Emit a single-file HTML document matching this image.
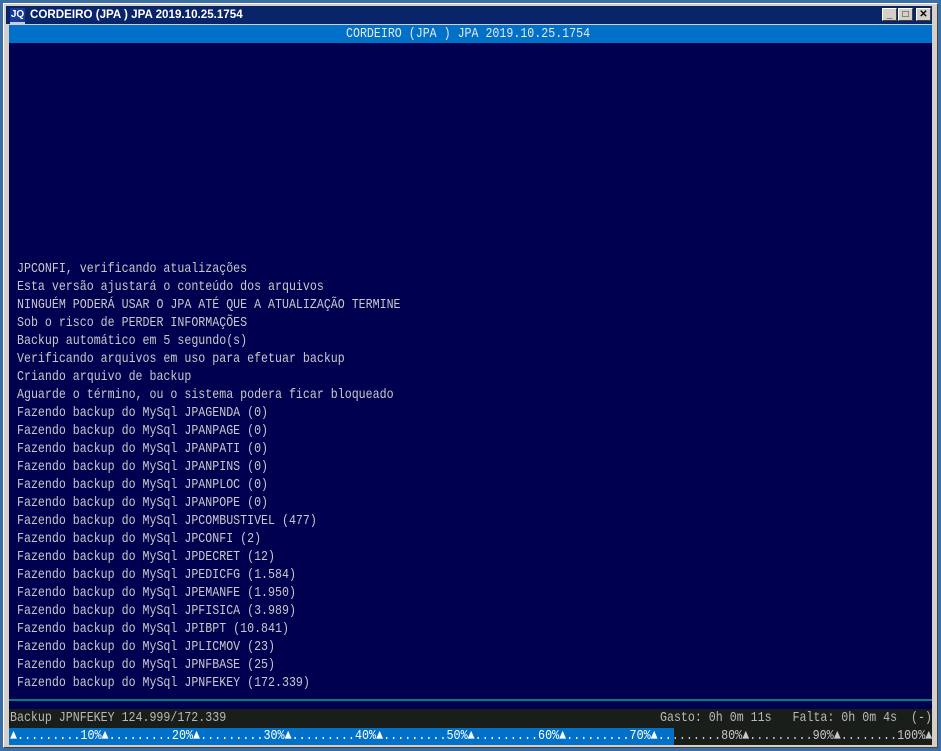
<!DOCTYPE html><html><head><meta charset="utf-8"><style>
body{margin:0;width:941px;height:751px;background:#3a6ea5;position:relative;overflow:hidden;font-family:"Liberation Mono",monospace}
.win{position:absolute;left:3px;top:3px;width:935px;height:745px;background:#d4d0c8;border-top:1px solid #fff;border-left:1px solid #fff;border-right:1px solid #404040;border-bottom:1px solid #404040;box-sizing:border-box}
.title{position:absolute;left:6px;top:6px;width:926px;height:18px;background:#0a246a;color:#fff;font:bold 11.6px "Liberation Sans",sans-serif;line-height:18px}
.title .ic{position:absolute;left:4px;top:2px;width:15px;height:14px;background:#1a3a9a;color:#fff;font-size:10px;line-height:13px;text-align:center;border-bottom:2px solid #ccd}
.btn{position:absolute;top:2px;width:15px;height:13px;background:#d4d0c8;border-top:1px solid #fff;border-left:1px solid #fff;border-right:1px solid #404040;border-bottom:1px solid #404040;box-sizing:border-box;color:#000;font-size:10px;line-height:11px;text-align:center}
.hdr{position:absolute;left:9px;top:25px;width:923px;height:18px;background:#0070c8}
.hdr span{position:absolute;left:337px;top:0;color:#e8e8f0;font-size:14px;line-height:18px;white-space:pre;transform:scaleX(0.83);transform-origin:0 0}
.body{position:absolute;left:9px;top:43px;width:923px;height:657px;background:#000050}
.line{position:absolute;left:9px;top:699px;width:923px;height:2px;background:#008080}
.gap{position:absolute;left:9px;top:701px;width:923px;height:8px;background:#000050}
.txt{position:absolute;left:17px;top:260px;color:#c8c8c8;font-size:14px;line-height:18px;white-space:pre;transform:scaleX(0.83);transform-origin:0 0}
.st{position:absolute;left:9px;top:709px;width:923px;height:19px;background:#1a1e1a;color:#b8b8b8;font-size:14px;line-height:19px}
.st span{position:absolute;top:0;white-space:pre;transform:scaleX(0.83);transform-origin:0 0}
.pb{position:absolute;left:9px;top:728px;width:923px;height:17px;background:#1a1e1a}
.pb .fill{position:absolute;left:0;top:0;width:665px;height:17px;background:#0070c8}
.seg{position:absolute;top:0;height:17px;color:#c8c8c8;font-size:14px;line-height:17px;white-space:pre;transform:scaleX(0.838);transform-origin:0 0}
.on{color:#fff}
</style></head><body>
<div class="win"></div>
<div class="title"><div class="ic">JQ</div><span style="position:absolute;left:24px">CORDEIRO (JPA ) JPA 2019.10.25.1754</span>
<div class="btn" style="left:876px">_</div><div class="btn" style="left:892px">□</div><div class="btn" style="left:910px">✕</div></div>
<div class="hdr"><span>CORDEIRO (JPA ) JPA 2019.10.25.1754</span></div>
<div class="body"></div>
<div class="txt">JPCONFI, verificando atualizações
Esta versão ajustará o conteúdo dos arquivos
NINGUÉM PODERÁ USAR O JPA ATÉ QUE A ATUALIZAÇÃO TERMINE
Sob o risco de PERDER INFORMAÇÕES
Backup automático em 5 segundo(s)
Verificando arquivos em uso para efetuar backup
Criando arquivo de backup
Aguarde o término, ou o sistema podera ficar bloqueado
Fazendo backup do MySql JPAGENDA (0)
Fazendo backup do MySql JPANPAGE (0)
Fazendo backup do MySql JPANPATI (0)
Fazendo backup do MySql JPANPINS (0)
Fazendo backup do MySql JPANPLOC (0)
Fazendo backup do MySql JPANPOPE (0)
Fazendo backup do MySql JPCOMBUSTIVEL (477)
Fazendo backup do MySql JPCONFI (2)
Fazendo backup do MySql JPDECRET (12)
Fazendo backup do MySql JPEDICFG (1.584)
Fazendo backup do MySql JPEMANFE (1.950)
Fazendo backup do MySql JPFISICA (3.989)
Fazendo backup do MySql JPIBPT (10.841)
Fazendo backup do MySql JPLICMOV (23)
Fazendo backup do MySql JPNFBASE (25)
Fazendo backup do MySql JPNFEKEY (172.339)</div>
<div class="line"></div><div class="gap"></div>
<div class="st"><span style="left:1px">Backup JPNFEKEY 124.999/172.339</span><span style="left:651px">Gasto: 0h 0m 11s   Falta: 0h 0m 4s  (-)</span></div>
<div class="pb"><div class="fill"></div>
<div class="seg" style="left:1px"><span class="on">▲.........10%▲.........20%▲.........30%▲.........40%▲.........50%▲.........60%▲.........70%▲..</span>.......80%▲.........90%▲........100%▲</div>
</div>
</body></html>
